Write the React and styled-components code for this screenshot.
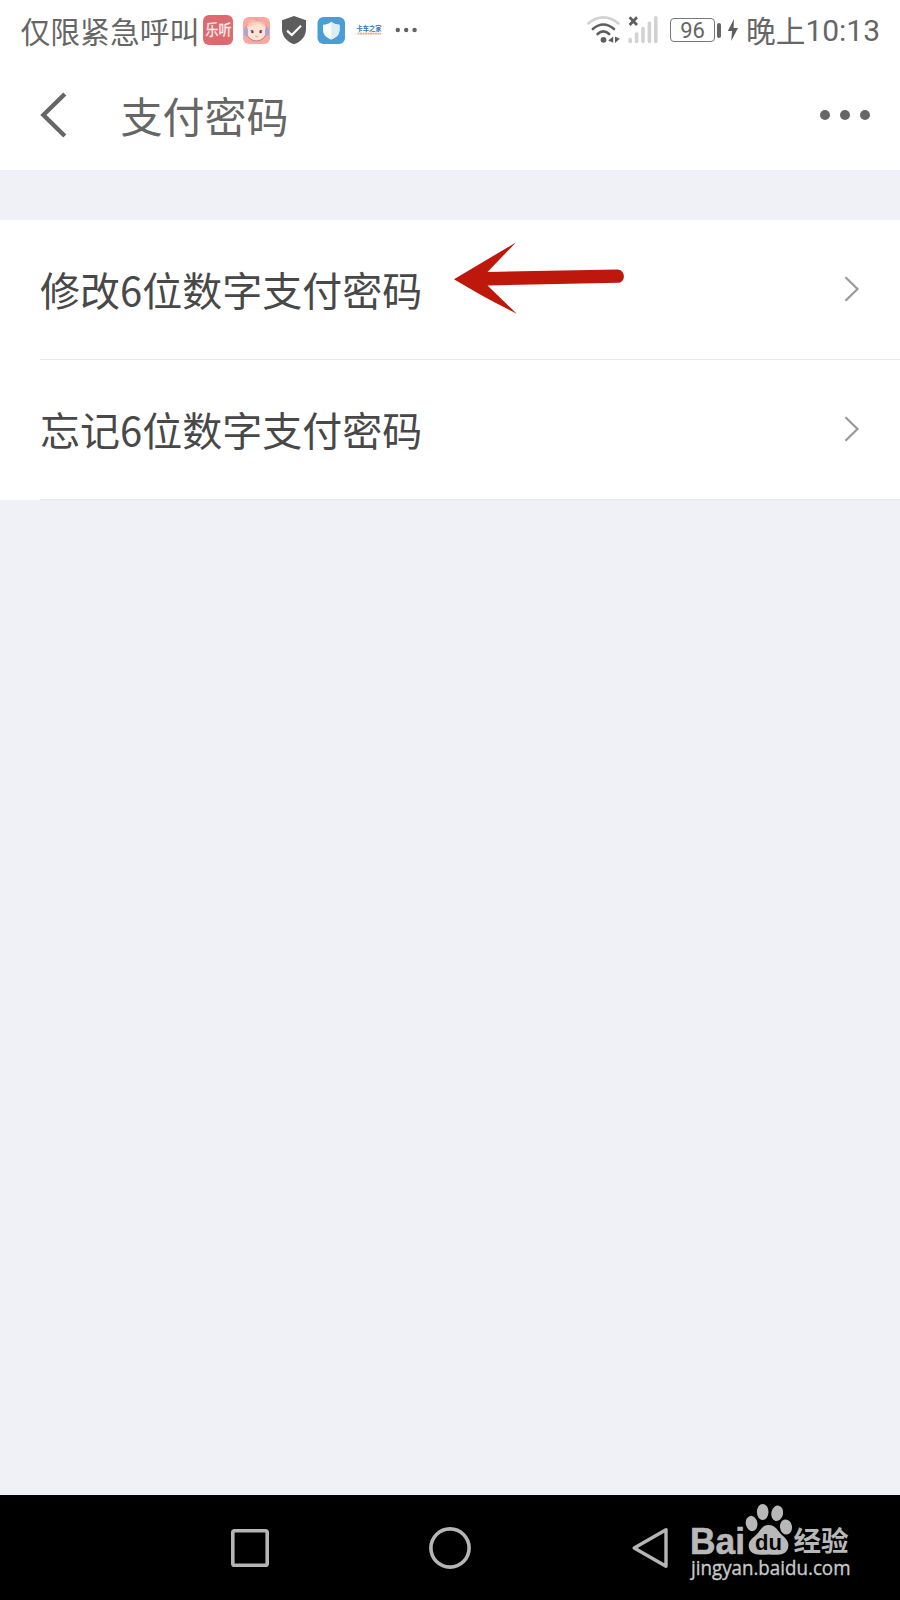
import styled, { createGlobalStyle } from "styled-components";

const GlobalStyle = createGlobalStyle`
    * {
        box-sizing: border-box;
    }
    body {
        margin: 0;
        background: #F0F1F6;
        font-family: "Noto Sans CJK SC", "Noto Sans", sans-serif;
    }
    svg {
        display: block;
        flex-shrink: 0;
    }
`;

const rows = ["修改6位数字支付密码", "忘记6位数字支付密码"];

function StatusBar() {
    return (
        <Status>
            <Carrier>仅限紧急呼叫</Carrier>
            <AppIcons />
            <Spacer />
            <Signals />
            <Battery>96</Battery>
            <BatteryTip />
            <Bolt width="12" height="24" viewBox="0 0 12 24">
                <path d="M7 1 L0.8 13 H5 L4.2 23 L11 10 H6.6 Z" fill="#5E5E5E" />
            </Bolt>
            <Clock>晚上<b>10:13</b></Clock>
        </Status>
    )
}

function AppIcons() {
    return (
        <svg width="220" height="60" viewBox="200 0 220 60">
            <rect x="203" y="15" width="30" height="30" rx="6" fill="#DE6A70" />
            <text x="205.5" y="35.4" fontSize="14.5" textLength="26" lengthAdjust="spacingAndGlyphs" fill="#FFF0F0" stroke="#FFF0F0" strokeWidth="0.3">乐听</text>

            <rect x="243" y="17" width="27" height="27" rx="6" fill="#FBA69E" />
            <circle cx="256.4" cy="30.5" r="10.4" fill="#FDE3D6" stroke="#9A6A68" strokeWidth="0.7" />
            <path d="M247 27 C248 20 253 19.4 257 20.4 C262 19.6 265.4 22.5 265.8 27 C262 26.4 261 24.6 258 23.6 C255 26 250 26 247 27 Z" fill="#FFCDBB" />
            <path d="M249 23.4 Q252 20 257 21 Q262 20.4 264.5 24.4" fill="none" stroke="#B98580" strokeWidth="0.5" />
            <path d="M250.6 30.4 l2.6 0.4 M259.6 30.8 l2.6 -0.4" stroke="#5B3C3C" strokeWidth="0.8" />
            <circle cx="252.4" cy="32" r="1.2" fill="#5B3C3C" />
            <circle cx="260.6" cy="32" r="1.2" fill="#5B3C3C" />
            <path d="M255.3 36.2 q1.2 0.8 2.4 0" fill="none" stroke="#A65F5A" strokeWidth="0.6" />
            <rect x="244" y="27.5" width="4" height="8.5" rx="2" fill="#A9A7D3" />
            <rect x="265" y="27.5" width="4" height="8.5" rx="2" fill="#A9A7D3" />

            <path d="M294 16 L306 20.3 V29 C306 36.5 301 41.8 294 44.3 C287 41.8 282 36.5 282 29 V20.3 Z" fill="#5D5D5D" />
            <path d="M287 30.6 L291.8 35 L301 25.8" fill="none" stroke="#FFFFFF" strokeWidth="2.2" />

            <rect x="317.5" y="17" width="27.5" height="27" rx="6" fill="#4A9ED5" />
            <path d="M331.2 21.8 C334 24.2 336.5 24.6 339.5 24.8 V30 C339.5 34.5 336.5 37.5 331.2 39.6 C326 37.5 323 34.5 323 30 V24.8 C326 24.6 328.5 24.2 331.2 21.8 Z" fill="#F7FCFF" />
            <path d="M331.2 21.8 C334 24.2 336.5 24.6 339.5 24.8 V30 C339.5 34.5 336.5 37.5 331.2 39.6 Z" fill="#DCEDF8" />

            <text x="356.5" y="31.4" fontSize="6.6" fontWeight="700" textLength="25" lengthAdjust="spacingAndGlyphs" fill="#2F78B8">卡车之家</text>
            <path d="M357.5 33.6 H381" stroke="#EEA57E" strokeWidth="1.8" strokeDasharray="2 0.5" />

            <circle cx="397.8" cy="30" r="2.2" fill="#626262" />
            <circle cx="406.2" cy="30" r="2.2" fill="#626262" />
            <circle cx="414.6" cy="30" r="2.2" fill="#626262" />
        </svg>
    )
}

function Signals() {
    return (
        <svg width="75" height="60" viewBox="585 0 75 60">
            <g fill="none" strokeWidth="2.6" strokeLinecap="round">
                <path d="M588.3 23.4 Q603.3 11.4 618.5 23.4" stroke="#D2D2D2" />
                <path d="M592.8 29 Q603.3 20 614 29" stroke="#5E5E5E" />
                <path d="M597.6 34 Q603.3 28.8 609.2 34" stroke="#5E5E5E" />
            </g>
            <circle cx="603.5" cy="39.8" r="2.9" fill="#5E5E5E" />
            <path d="M613.2 36.4 V42.8 L608.2 40.6 Z M615 36.4 V43 L619.8 38.8 Z" fill="#5E5E5E" />
            <path d="M629.6 17.3 L637 25 M637 17.3 L629.6 25" stroke="#5E5E5E" strokeWidth="2.7" />
            <g stroke="#D2D2D2" strokeWidth="3.6" strokeLinecap="round">
                <path d="M630.2 39.6 V41.4" />
                <path d="M636.6 34 V41.4" />
                <path d="M643 28.6 V41.4" />
                <path d="M649.4 23.2 V41.4" />
                <path d="M655.8 17.8 V41.4" />
            </g>
        </svg>
    )
}

function RedArrow() {
    return (
        <Arrow width="172" height="76" viewBox="453 240 172 76">
            <path
                d="M454 279.2 L515.8 242.5 L487.5 272 L617 269.6 C626 269.6 626 282.6 618 282.7 L487.5 285.4 L517 314 C495 302.5 473 291 454 279.2 Z"
                fill="#BD180B"
            />
        </Arrow>
    )
}

function Watermark() {
    return (
        <Mark width="170" height="90" viewBox="685 1500 170 90">
            <text x="690" y="1553.6" fontFamily="Liberation Sans" fontWeight="700" fontSize="36" textLength="55" lengthAdjust="spacingAndGlyphs" fill="#B8B8B8" stroke="#B8B8B8" strokeWidth="0.6">Bai</text>
            <g fill="#B8B8B8">
                <ellipse cx="751.6" cy="1523.5" rx="5.8" ry="7.7" transform="rotate(-10 751.6 1523.5)" />
                <ellipse cx="762.7" cy="1512" rx="5.8" ry="8" />
                <ellipse cx="777.2" cy="1513.3" rx="5.9" ry="7.8" transform="rotate(12 777.2 1513.3)" />
                <ellipse cx="786" cy="1527" rx="6" ry="7.6" transform="rotate(-8 786 1527)" />
                <path d="M768.5 1525 C776 1525 777.5 1531 782.5 1535.5 C787 1539.5 789.5 1543 788 1548 C786 1555.5 778 1555 768.5 1554.6 C760 1555 751 1555.5 749 1548 C747.5 1542 752 1538.5 756 1535 C760.5 1531 761.5 1525 768.5 1525 Z" />
            </g>
            <text x="755" y="1549.6" fontFamily="Liberation Sans" fontWeight="700" fontSize="21.5" textLength="27" lengthAdjust="spacingAndGlyphs" fill="#050505">du</text>
            <text x="793.6" y="1551.3" fontWeight="700" fontSize="27.5" fill="#B8B8B8">经验</text>
            <text x="691" y="1575.2" fontFamily="Open Sans" fontSize="19.5" textLength="159.5" lengthAdjust="spacingAndGlyphs" fill="#C9C9C9" stroke="#C9C9C9" strokeWidth="0.35">jingyan.baidu.com</text>
        </Mark>
    )
}

export default function App() {
    return (
        <Screen>
            <GlobalStyle />
            <StatusBar />
            <Header>
                <svg width="27" height="46" viewBox="0 0 27 46">
                    <path d="M24.8 2 L3.4 23 L24.8 44" fill="none" stroke="#666666" strokeWidth="4.4" />
                </svg>
                <Title>支付密码</Title>
                <More><i /><i /><i /></More>
            </Header>
            <List>
                {rows.map((label, index) => (
                    <Row key={label}>
                        <Label>{label}</Label>
                        {index === 0 && <RedArrow />}
                        <svg width="16" height="26" viewBox="0 0 16 26">
                            <path d="M1.5 1.2 L13.5 13 L1.5 24.8" fill="none" stroke="#999999" strokeWidth="2.2" />
                        </svg>
                    </Row>
                ))}
            </List>
            <NavBar>
                <svg width="38" height="38" viewBox="0 0 38 38">
                    <rect x="1.8" y="1.8" width="34.4" height="34.4" rx="1.8" fill="none" stroke="#B5B5B5" strokeWidth="3.6" />
                </svg>
                <svg width="42" height="42" viewBox="0 0 42 42">
                    <circle cx="21" cy="21" r="19.1" fill="none" stroke="#B5B5B5" strokeWidth="3.6" />
                </svg>
                <svg width="38" height="42" viewBox="0 0 38 42">
                    <path d="M35 2.7 V39.3 L3.2 21 Z" fill="none" stroke="#B5B5B5" strokeWidth="3.4" strokeLinejoin="round" />
                </svg>
                <Watermark />
            </NavBar>
        </Screen>
    )
}

const Screen = styled.div`
    display: flex;
    flex-direction: column;
    width: 900px;
    height: 1600px;
    overflow: hidden;
    background: #F0F1F6;
`;

const Status = styled.div`
    display: flex;
    align-items: center;
    height: 60px;
    padding: 0 20px;
    background: #FFFFFF;
    color: #666666;
`;

const Carrier = styled.div`
    width: 180px;
    padding-left: 0.5px;
    font-size: 29.8px;
    line-height: 60px;
    white-space: nowrap;
`;

const Spacer = styled.div`
    flex: 1;
`;

const Battery = styled.div`
    width: 45px;
    height: 24px;
    margin-left: 10px;
    border: 1.5px solid #777777;
    border-radius: 4px;
    font-family: Roboto, sans-serif;
    font-size: 22px;
    line-height: 24px;
    text-align: center;
`;

const BatteryTip = styled.div`
    width: 4px;
    height: 15px;
    margin-left: 2px;
    border-radius: 2px;
    background: #666666;
`;

const Bolt = styled.svg`
    margin-left: 6px;
`;

const Clock = styled.div`
    display: flex;
    width: 134px;
    margin-left: 7px;
    font-size: 29.7px;
    line-height: 60px;
    white-space: nowrap;
    b {
        padding-top: 1px;
        font-family: Roboto, sans-serif;
        font-size: 30px;
        font-weight: 400;
    }
`;

const Header = styled.div`
    display: flex;
    align-items: center;
    height: 110px;
    padding: 0 30px 0 40px;
    background: #FFFFFF;
`;

const Title = styled.div`
    flex: 1;
    margin-left: 53.5px;
    font-size: 42px;
    line-height: 110px;
    color: #666666;
`;

const More = styled.div`
    display: flex;
    gap: 10px;
    i {
        width: 10px;
        height: 10px;
        border-radius: 50%;
        background: #666666;
    }
`;

const List = styled.div`
    margin-top: 50px;
    padding-left: 40px;
    background: #FFFFFF;
`;

const Row = styled.div`
    position: relative;
    display: flex;
    align-items: center;
    justify-content: space-between;
    height: 140px;
    padding: 0 40px 2px 0;
    border-bottom: 1px solid #E9E9EB;
`;

const Label = styled.div`
    font-size: 40px;
    line-height: 136px;
    color: #484848;
`;

const Arrow = styled.svg`
    position: absolute;
    left: 413px;
    top: 20px;
`;

const NavBar = styled.div`
    position: relative;
    display: flex;
    align-items: center;
    height: 105px;
    margin-top: auto;
    padding-left: 231px;
    gap: 160px;
    background: #000000;
`;

const Mark = styled.svg`
    position: absolute;
    left: 685px;
    top: 5px;
`;
